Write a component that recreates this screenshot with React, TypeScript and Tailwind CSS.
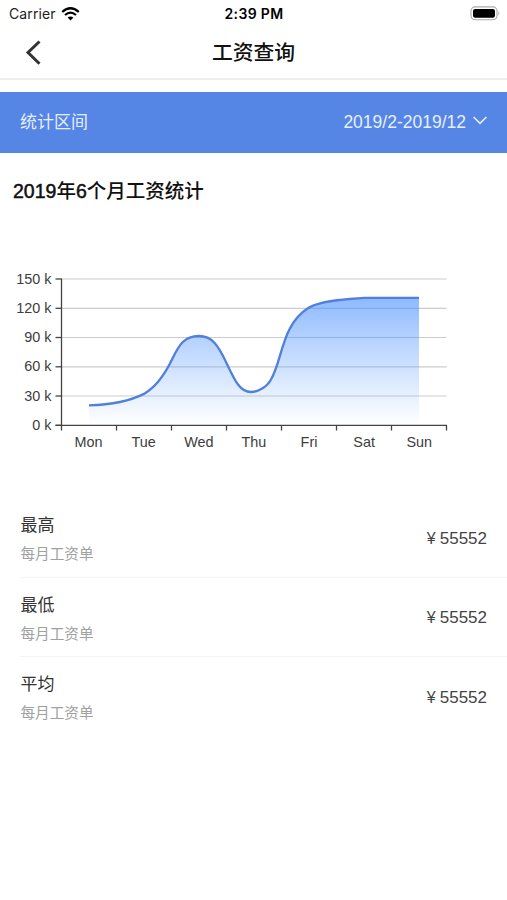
const gridLines = [
  { label: '150 k', y: 279 },
  { label: '120 k', y: 308.3 },
  { label: '90 k', y: 337.5 },
  { label: '60 k', y: 366.8 },
  { label: '30 k', y: 396 },
  { label: '0 k', y: 425.3 },
];

const days = ['Mon', 'Tue', 'Wed', 'Thu', 'Fri', 'Sat', 'Sun'];

const rows = ['最高', '最低', '平均'];

const curve =
  'M89 405.4 C107 404.8 129 401.5 144 393.9 C156 387 165 374 172 359.5 C179 345 184 336 199 336 C212 336 218 345 226.5 363 C235 381 240 392 251 392 C258 392 267 387 271 379.5 C283 359 281 325 309 307.6 C322 299.8 350 299 364 297.9 L419 297.9';

function StatusBar() {
  return (
    <div className="grid h-[27px] grid-cols-3 items-center pl-[9px] pr-[6px] text-black">
      <div className="flex items-center gap-[5px]">
        <span className="font-['Inter',sans-serif] text-[14px] leading-none tracking-[0.1px] text-[#222]">Carrier</span>
        <svg width="19" height="14" viewBox="0 0 19 14" fill="none" stroke="#000" strokeWidth="2.3">
          <path d="M1.2 5 Q9.5 -2.4 17.8 5" />
          <path d="M4 8 Q9.5 3.3 15 8" />
          <path d="M6.6 10.6 Q9.5 8.2 12.4 10.6 L9.5 13.6 Z" fill="#000" stroke="none" />
        </svg>
      </div>
      <div className="pr-[2px] pt-px text-center font-['Inter',sans-serif] text-[14px] font-semibold leading-none tracking-[0.35px]">
        2:39 PM
      </div>
      <svg className="justify-self-end" width="31" height="15" viewBox="0 0 31 15">
        <rect x="1" y="0.9" width="26" height="12.8" rx="4" fill="#fff" stroke="#aaa" strokeWidth="1.1" />
        <rect x="3" y="2.9" width="22" height="8.8" rx="2.2" fill="#000" />
        <path d="M28.4 5.2 Q30.4 7.3 28.4 9.4 Z" fill="#aaa" />
      </svg>
    </div>
  );
}

function SalaryChart() {
  return (
    <svg
      className="block font-['Liberation_Sans','Arial',sans-serif] text-[14.4px]"
      width="507"
      height="200"
      viewBox="0 262 507 200"
    >
      <defs>
        <linearGradient id="area" gradientUnits="userSpaceOnUse" x1="0" y1="298" x2="0" y2="425">
          <stop offset="0" stopColor="#4890ff" stopOpacity="0.62" />
          <stop offset="1" stopColor="#5a9aff" stopOpacity="0" />
        </linearGradient>
      </defs>
      {gridLines.slice(0, 5).map((line) => (
        <path key={line.label} d={`M62 ${line.y}H446.5`} stroke="#ccc" strokeWidth="1.2" />
      ))}
      <path d={`${curve} V425 H89 Z`} fill="url(#area)" />
      <path d={curve} fill="none" stroke="#5080dc" strokeWidth="2.3" strokeLinejoin="round" />
      <g stroke="#444" strokeWidth="1.3">
        <path d="M61.5 278.4V430.5M55.5 425.3H447" />
        {gridLines.map((line) => (
          <path key={line.label} d={`M55.5 ${line.y}H61.5`} />
        ))}
        {days.map((day, i) => (
          <path key={day} d={`M${116.5 + i * 55} 425.3V430.5`} />
        ))}
      </g>
      <g fill="#3d3d3d">
        {gridLines.map((line) => (
          <text key={line.label} x="51.5" y={line.y + 4.6} textAnchor="end">
            {line.label}
          </text>
        ))}
        {days.map((day, i) => (
          <text key={day} x={88.6 + i * 55.1} y="447" textAnchor="middle">
            {day}
          </text>
        ))}
      </g>
    </svg>
  );
}

export default function App() {
  return (
    <div className="flex h-[900px] w-[507px] flex-col overflow-hidden bg-white font-['Liberation_Sans','Noto_Sans_CJK_SC',sans-serif]">
      <StatusBar />
      <header className="grid h-[53px] shrink-0 grid-cols-[60px_1fr_60px] items-center border-b-2 border-[#eee]">
        <svg className="ml-[24px]" width="18" height="26" viewBox="0 0 18 26" fill="none" stroke="#333" strokeWidth="3">
          <path d="M15.5 1.5 L4 12.5 L15.5 23.8" />
        </svg>
        <h1 className="pt-[2px] text-center text-[20.8px] font-medium leading-none text-[#111]">工资查询</h1>
      </header>
      <section className="mt-[11.5px] flex h-[61px] shrink-0 items-center justify-between bg-[#5585e5] pl-[20px] pr-[20px] text-[17px] leading-none text-[#e7efff]">
        <span>统计区间</span>
        <div className="flex items-center gap-[7px]">
          <span className="pt-px text-[17.5px]">2019/2-2019/12</span>
          <svg className="mb-[3px]" width="14" height="9" viewBox="0 0 14 9" fill="none" stroke="#e7efff" strokeWidth="1.6">
            <path d="M0.6 1 L7 7.4 L13.4 1" />
          </svg>
        </div>
      </section>
      <h2 className="mt-[27.5px] pl-[13px] text-[19.5px] font-medium leading-[22px] text-[#111]">
        <span className="[-webkit-text-stroke:0.5px_#111]">2019</span>年
        <span className="[-webkit-text-stroke:0.5px_#111]">6</span>个月工资统计
      </h2>
      <div className="mt-[60px] h-[200px] shrink-0">
        <SalaryChart />
      </div>
      <ul className="mt-[36px] pl-[20px]">
        {rows.map((title) => (
          <li
            key={title}
            className="flex h-[79.5px] items-center justify-between border-b border-[#f4f4f4] pr-[20px] last:border-transparent"
          >
            <div className="flex flex-col gap-[13px] pl-[0.5px] pt-[5px]">
              <span className="text-[17px] leading-[17px] text-[#333]">{title}</span>
              <span className="text-[14.6px] leading-[15px] text-[#a0a0a0]">每月工资单</span>
            </div>
            <span className="flex items-baseline gap-[4px] pt-[2px] text-[17px] leading-none text-[#444]">
              <span className="text-[16px]">¥</span>
              <span>55552</span>
            </span>
          </li>
        ))}
      </ul>
    </div>
  );
}
